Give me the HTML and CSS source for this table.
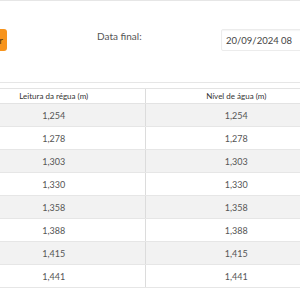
FILE: index.html
```html
<!DOCTYPE html>
<html lang="pt">
<head>
<meta charset="utf-8">
<link rel="stylesheet" href="styles.css">
</head>
<body>
<div class="page">
  <div class="filters">
    <button class="btn">Filtrar</button>
    <label class="label">Data final:</label>
    <div class="input">20/09/2024 08</div>
  </div>
  <table class="grid">
    <thead>
      <tr><th>Leitura da régua (m)</th><th>Nível de água (m)</th></tr>
    </thead>
    <tbody>
      <tr><td>1,254</td><td>1,254</td></tr>
      <tr><td>1,278</td><td>1,278</td></tr>
      <tr><td>1,303</td><td>1,303</td></tr>
      <tr><td>1,330</td><td>1,330</td></tr>
      <tr><td>1,358</td><td>1,358</td></tr>
      <tr><td>1,388</td><td>1,388</td></tr>
      <tr><td>1,415</td><td>1,415</td></tr>
      <tr><td>1,441</td><td>1,441</td></tr>
    </tbody>
  </table>
</div>
</body>
</html>
```
FILE: styles.css
```css
html, body {
  margin: 0;
  padding: 0;
  background: #fff;
  overflow: hidden;
}
body {
  width: 300px;
  height: 300px;
  font-family: Lato, "Open Sans", sans-serif;
  color: #555;
}
.page {
  border-top: 1px solid #e6e6e6;
}
.filters {
  display: flex;
  align-items: flex-start;
  height: 53px;
  padding-top: 28px;
  border-bottom: 1px solid #e6e6e6;
}
.btn {
  flex: none;
  width: 60px;
  height: 22px;
  margin-left: -53px;
  padding: 0 4px 0 0;
  text-align: right;
  background: #f7941d;
  border: none;
  border-radius: 3px;
  font-family: Lato, sans-serif;
  font-size: 10px;
  color: #5a3a10;
}
.label {
  flex: none;
  width: 124px;
  margin-left: 90px;
  margin-top: 1px;
  font-size: 10px;
  color: #555;
  white-space: nowrap;
}
.input {
  flex: none;
  width: 90px;
  height: 22px;
  box-sizing: border-box;
  padding: 5px 0 0 4px;
  border: 1px solid #ececec;
  border-radius: 2px;
  box-shadow: inset 0 1px 1px rgba(0,0,0,0.04);
  font-size: 9.5px;
  color: #444;
  white-space: nowrap;
  overflow: hidden;
}
.grid {
  margin-top: 5px;
  margin-left: -37px;
  width: 364px;
  border-collapse: collapse;
  table-layout: fixed;
}
.grid th {
  height: 14px;
  padding: 0;
  border-top: 1px solid #e3e3e3;
  border-bottom: 1px solid #e3e3e3;
  font-size: 8px;
  font-weight: normal;
  color: #333;
  text-align: center;
}
.grid td {
  height: 22px;
  padding: 0;
  border-bottom: 1px solid #e6e6e6;
  font-size: 9px;
  color: #555;
  text-align: center;
}
.grid th + th, .grid td + td {
  border-left: 1px solid #dcdcdc;
}
.grid tbody tr:nth-child(odd) {
  background: #f2f2f2;
}
```
